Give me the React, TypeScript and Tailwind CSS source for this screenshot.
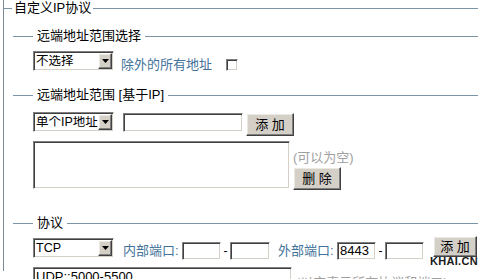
import React from 'react';

const line = 'h-px bg-[#7b95a6]';
const sunken =
  'bg-white border border-t-[#808080] border-l-[#808080] border-r-white border-b-white shadow-[inset_1px_1px_0_#404040,inset_-1px_-1px_0_#d4d0c8]';
const raised =
  'bg-[#d4d0c8] border border-t-white border-l-white border-r-[#404040] border-b-[#404040] shadow-[inset_-1px_-1px_0_#808080,inset_1px_1px_0_#ece9e2]';

const Legend: React.FC<{ title: string; className?: string }> = ({ title, className = '' }) => (
  <div className={`flex items-center h-[16px] ${className}`}>
    <div className={`${line} ml-[9px] w-[20px] shrink-0`} />
    <span className="px-[4px] text-[13px] leading-[16px] text-black whitespace-nowrap">{title}</span>
    <div className={`${line} flex-1`} />
  </div>
);

const Select: React.FC<{ value: string; className?: string }> = ({ value, className = '' }) => (
  <div className={`${sunken} flex items-center w-[81px] h-[20px] shrink-0 ${className}`}>
    <span className="flex-1 min-w-0 overflow-hidden pl-[2px] text-[12.5px] leading-none text-black whitespace-nowrap">
      {value}
    </span>
    <div className={`${raised} mr-[1px] w-[14px] h-[16px] shrink-0 flex items-center justify-center`}>
      <svg width="7" height="4" viewBox="0 0 7 4">
        <path d="M0 0h7L3.5 4z" fill="#000" />
      </svg>
    </div>
  </div>
);

const Button: React.FC<{ label: string; className?: string }> = ({ label, className = '' }) => (
  <div className={`${raised} flex items-center justify-center text-[13px] leading-none text-black whitespace-pre shrink-0 ${className}`}>
    {label}
  </div>
);

export default function App() {
  return (
    <div className="relative w-[486px] h-[279px] overflow-hidden bg-white font-['Liberation_Sans','Noto_Sans_CJK_SC',sans-serif]">
      <div className="ml-[3px] mr-[8px] mt-[8px] h-[271px] border-l border-[#7b8a95]">
        {/* outer legend */}
        <div className="-mt-[8px] flex items-center h-[16px]">
          <div className={`${line} w-[8px] shrink-0`} />
          <span className="px-[2px] text-[13px] leading-[16px] text-black whitespace-nowrap">自定义IP协议</span>
          <div className={`${line} flex-1`} />
        </div>

        <Legend title="远端地址范围选择" className="mt-[12px]" />
        <div className="flex items-start pl-[29px] mt-[7px]">
          <Select value="不选择" />
          <span className="ml-[7px] mt-[4px] h-[20px] leading-[20px] text-[13px] text-[#42729a] whitespace-nowrap">
            除外的所有地址
          </span>
          <div className={`${sunken} ml-[14px] mt-[8px] w-[12px] h-[12px]`} />
        </div>

        <Legend title="远端地址范围 [基于IP]" className="mt-[12px]" />
        <div className="flex items-start pl-[29px] mt-[9px]">
          <Select value="单个IP地址" className="h-[19px]" />
          <div className={`${sunken} ml-[9px] mt-[1px] w-[120px] h-[19px]`} />
          <Button label="添 加" className="ml-[3px] mt-[1px] w-[48px] h-[23px]" />
        </div>
        <div className="flex items-start pl-[29px] mt-[5px]">
          <div className={`${sunken} w-[257px] h-[48px]`} />
          <div className="ml-[3px] flex flex-col">
            <span className="mt-[10px] h-[14px] leading-[14px] text-[13px] text-[#a0a0a0] whitespace-nowrap">(可以为空)</span>
            <Button label="删 除" className="mt-[2px] w-[48px] h-[23px]" />
          </div>
        </div>

        <Legend title="协议" className="mt-[25px]" />
        <div className="flex items-start pl-[29px] mt-[5px]">
          <Select value="TCP" className="mt-[2px] h-[19px]" />
          <span className="ml-[9px] w-[59px] mt-[6px] h-[18px] leading-[18px] text-[13px] text-[#42729a] whitespace-nowrap">
            内部端口:
          </span>
          <div className={`${sunken} mt-[6px] w-[39px] h-[18px]`} />
          <span className="w-[9px] mt-[6px] h-[18px] leading-[18px] text-[12px] text-black text-center">-</span>
          <div className={`${sunken} mt-[6px] w-[40px] h-[18px]`} />
          <span className="ml-[8px] w-[59px] mt-[6px] h-[18px] leading-[18px] text-[13px] text-[#42729a] whitespace-nowrap">
            外部端口:
          </span>
          <div className={`${sunken} mt-[6px] w-[39px] h-[18px] pl-[2px] text-[13px] leading-[16px] text-black`}>8443</div>
          <span className="w-[9px] mt-[6px] h-[18px] leading-[18px] text-[12px] text-black text-center">-</span>
          <div className={`${sunken} mt-[6px] w-[39px] h-[18px]`} />
          <Button label="添 加" className="ml-[9px] w-[44px] h-[21px]" />
        </div>
        <div className="flex items-start pl-[29px] mt-[7px]">
          <div className={`${sunken} w-[259px] h-[30px] pl-[2px] pt-[1px] text-[13px] leading-[15px] text-black`}>
            UDP::5000-5500
          </div>
          <span className="ml-[4px] mt-[8px] text-[13px] leading-[16px] text-[#a0a0a0] whitespace-nowrap">
            (以空表示所有协议和端口)
          </span>
        </div>
      </div>

      <span className="absolute left-[430px] top-[255px] text-[11px] leading-[12px] font-bold tracking-[0.3px] text-[#1a1a1a]">
        KHAI.CN
      </span>
    </div>
  );
}
